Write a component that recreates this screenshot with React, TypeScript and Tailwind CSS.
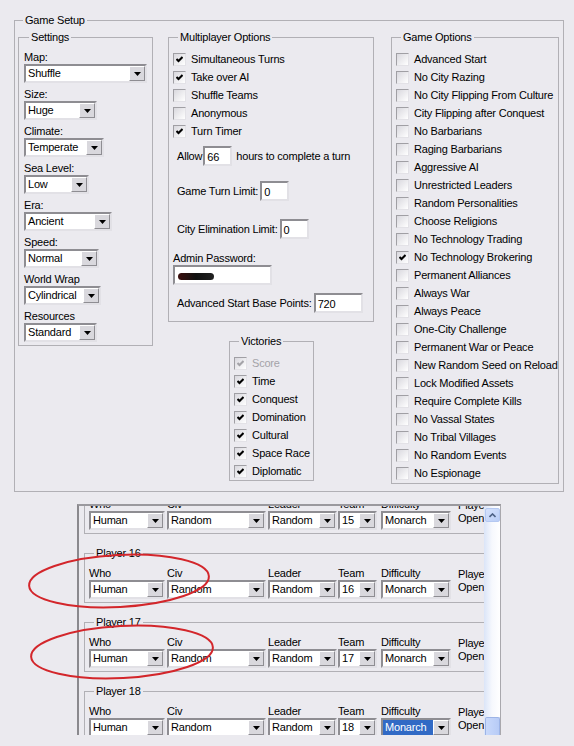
import React from 'react';

const settings = [
  { label: 'Map:', value: 'Shuffle', w: 'w-[123px]' },
  { label: 'Size:', value: 'Huge', w: 'w-[73px]' },
  { label: 'Climate:', value: 'Temperate', w: 'w-[80px]' },
  { label: 'Sea Level:', value: 'Low', w: 'w-[65px]' },
  { label: 'Era:', value: 'Ancient', w: 'w-[88px]' },
  { label: 'Speed:', value: 'Normal', w: 'w-[75px]' },
  { label: 'World Wrap', value: 'Cylindrical', w: 'w-[77px]' },
  { label: 'Resources', value: 'Standard', w: 'w-[73px]' },
];

const mpOptions = [
  { label: 'Simultaneous Turns', on: true },
  { label: 'Take over AI', on: true },
  { label: 'Shuffle Teams', on: false },
  { label: 'Anonymous', on: false },
  { label: 'Turn Timer', on: true },
];

const victories = [
  { label: 'Score', on: true, disabled: true },
  { label: 'Time', on: true },
  { label: 'Conquest', on: true },
  { label: 'Domination', on: true },
  { label: 'Cultural', on: true },
  { label: 'Space Race', on: true },
  { label: 'Diplomatic', on: true },
];

const gameOptions = [
  'Advanced Start',
  'No City Razing',
  'No City Flipping From Culture',
  'City Flipping after Conquest',
  'No Barbarians',
  'Raging Barbarians',
  'Aggressive AI',
  'Unrestricted Leaders',
  'Random Personalities',
  'Choose Religions',
  'No Technology Trading',
  'No Technology Brokering',
  'Permanent Alliances',
  'Always War',
  'Always Peace',
  'One-City Challenge',
  'Permanent War or Peace',
  'New Random Seed on Reload',
  'Lock Modified Assets',
  'Require Complete Kills',
  'No Vassal States',
  'No Tribal Villages',
  'No Random Events',
  'No Espionage',
];

function DownArrow() {
  return (
    <svg width="7" height="4" viewBox="0 0 7 4" aria-hidden>
      <path d="M0 0H7L3.5 4Z" fill="#000" />
    </svg>
  );
}

function Combo({ value, className = '', highlight = false }: { value: string; className?: string; highlight?: boolean }) {
  return (
    <div
      className={`flex h-[19px] shrink-0 border-2 border-t-[#8e8d92] border-l-[#8e8d92] border-b-[#e2e1e6] border-r-[#e2e1e6] bg-white ${className}`}
    >
      <div
        className={`flex min-w-0 flex-1 items-center overflow-hidden whitespace-nowrap pl-[2px] ${
          highlight ? 'bg-[#316ac5] text-white' : ''
        }`}
      >
        {value}
      </div>
      <div className="flex w-[16px] shrink-0 items-center justify-center border border-t-white border-l-white border-b-[#8e8d92] border-r-[#8e8d92] bg-[#d9d8dd]">
        <DownArrow />
      </div>
    </div>
  );
}

function Field({ className = '', children }: { className?: string; children?: React.ReactNode }) {
  return (
    <div
      className={`flex h-[20px] shrink-0 items-center border-2 border-t-[#8e8d92] border-l-[#8e8d92] border-b-[#e2e1e6] border-r-[#e2e1e6] bg-white pl-[2px] pt-[2px] ${className}`}
    >
      {children}
    </div>
  );
}

function Box({ on = false, disabled = false }: { on?: boolean; disabled?: boolean }) {
  return (
    <span className="flex h-[13px] w-[13px] shrink-0 items-center justify-center border border-t-[#a09fa4] border-l-[#a09fa4] border-b-[#e3e2e7] border-r-[#e3e2e7] bg-linear-to-br from-[#d9d8de] to-white">
      {on && (
        <svg width="7" height="7" viewBox="0 0 7 7" aria-hidden>
          <path d="M0.5 3L2.5 5L6.5 1" fill="none" stroke={disabled ? '#a4a3a8' : '#000'} strokeWidth="2" />
        </svg>
      )}
    </span>
  );
}

function CheckRow({ label, on = false, disabled = false }: { label: string; on?: boolean; disabled?: boolean }) {
  return (
    <div className="flex h-[18px] items-center">
      <Box on={on} disabled={disabled} />
      <span className={`ml-[5px] whitespace-nowrap ${disabled ? 'text-[#a4a3a8]' : ''}`}>{label}</span>
    </div>
  );
}

function Group({ title, className = '', children }: { title: string; className?: string; children: React.ReactNode }) {
  return (
    <fieldset className={`shrink-0 border border-[#b1b0b5] ${className}`}>
      <legend className="ml-[5px] px-[2px] leading-[13px]">{title}</legend>
      {children}
    </fieldset>
  );
}

function Col({ label, className = '', children }: { label: string; className?: string; children: React.ReactNode }) {
  return (
    <div className={`flex flex-col ${className}`}>
      <div className="h-[14px] leading-[14px] whitespace-nowrap">{label}</div>
      {children}
    </div>
  );
}

function PlayerBox({ n, selected = false }: { n: number; selected?: boolean }) {
  return (
    <fieldset className="w-[420px] shrink-0 border border-[#b1b0b5] pb-[3px] pl-[4px] pt-[6px]">
      <legend className="ml-[5px] px-[2px] leading-[13px]">Player {n}</legend>
      <div className="flex">
        <Col label="Who" className="mr-[2px]">
          <Combo value="Human" className="w-[76px]" />
        </Col>
        <Col label="Civ" className="mr-[2px]">
          <Combo value="Random" className="w-[99px]" />
        </Col>
        <Col label="Leader" className="mr-[1px]">
          <Combo value="Random" className="w-[69px]" />
        </Col>
        <Col label="Team" className="mr-[4px]">
          <Combo value={String(n)} className="w-[39px]" />
        </Col>
        <Col label="Difficulty" className="mr-[7px]">
          <Combo value="Monarch" className="w-[70px]" highlight={selected} />
        </Col>
        <div className="pt-[2px] leading-[13px] whitespace-nowrap">
          <div>Player</div>
          <div>Open</div>
        </div>
      </div>
    </fieldset>
  );
}

function Scrollbar() {
  return (
    <div className="flex w-[16px] shrink-0 flex-col justify-between bg-linear-to-r from-[#dbe5f8] via-[#f6f8fd] to-white">
      <div className="mx-auto mt-[2px] flex h-[14px] w-[15px] items-center justify-center rounded-[2px] border border-[#b4c8f1] bg-linear-to-br from-[#d6e2fc] to-[#b9cdf6]">
        <svg width="7" height="5" viewBox="0 0 7 5" aria-hidden>
          <path d="M0.5 4L3.5 1L6.5 4" fill="none" stroke="#4d6185" strokeWidth="1.6" />
        </svg>
      </div>
      <div className="mx-auto h-[18px] w-[15px] rounded-t-[2px] border border-b-0 border-[#9db4e6] bg-linear-to-r from-[#c9d9fb] to-[#b7cbf6]" />
    </div>
  );
}

export default function App() {
  return (
    <div className="relative min-h-screen bg-[#ebeaef] font-['Liberation_Sans',Arial,sans-serif] text-[11px] tracking-[-0.2px] text-black">
      <div className="pl-[14px] pt-[14px]">
        <Group title="Game Setup" className="w-[550px] pb-[7px] pl-[3px] pr-[4px]">
          <div className="mt-[4px] flex items-start">
            <Group title="Settings" className="w-[135px] pb-[3px] pl-[5px] pt-[6px]">
              <div className="flex flex-col gap-[4px]">
                {settings.map((s) => (
                  <Col key={s.label} label={s.label}>
                    <Combo value={s.value} className={s.w} />
                  </Col>
                ))}
              </div>
            </Group>

            <div className="ml-[15px] flex flex-col">
              <Group title="Multiplayer Options" className="w-[206px] pb-[8px] pl-[4px] pt-[6px]">
                {mpOptions.map((o) => (
                  <CheckRow key={o.label} label={o.label} on={o.on} />
                ))}
                <div className="mt-[6px] flex items-center pl-[4px] whitespace-nowrap">
                  <span>Allow</span>
                  <Field className="ml-[1px] w-[29px]">66</Field>
                  <span className="ml-[4px]">hours to complete a turn</span>
                </div>
                <div className="mt-[15px] flex items-center pl-[4px] whitespace-nowrap">
                  <span>Game Turn Limit:</span>
                  <Field className="ml-[2px] w-[29px]">0</Field>
                </div>
                <div className="mt-[18px] flex items-center pl-[4px] whitespace-nowrap">
                  <span>City Elimination Limit:</span>
                  <Field className="ml-[2px] w-[29px]">0</Field>
                </div>
                <div className="mt-[12px] h-[14px] leading-[14px]">Admin Password:</div>
                <Field className="w-[99px]">
                  <div className="ml-[1px] h-[7px] w-[36px] rounded-full bg-linear-to-r from-[#3a0d0d] via-[#111] to-[#222] blur-[0.6px]" />
                </Field>
                <div className="mt-[8px] flex items-center pl-[4px] whitespace-nowrap">
                  <span>Advanced Start Base Points:</span>
                  <Field className="ml-[2px] w-[49px]">720</Field>
                </div>
              </Group>

              <Group title="Victories" className="ml-[61px] mt-[13px] w-[85px] pl-[4px] pt-[6px]">
                {victories.map((v) => (
                  <CheckRow key={v.label} label={v.label} on={v.on} disabled={v.disabled} />
                ))}
              </Group>
            </div>

            <Group title="Game Options" className="ml-[17px] w-[168px] pb-[1px] pl-[4px] pt-[6px]">
              {gameOptions.map((g) => (
                <CheckRow key={g} label={g} on={g === 'No Technology Brokering'} />
              ))}
            </Group>
          </div>
        </Group>
      </div>

      <div className="ml-[77px] mt-[12px] flex h-[231px] w-[424px] border-t-2 border-l-2 border-r border-t-[#9a999e] border-l-[#8a898e] border-r-[#a9a8ad]">
        <div className="min-w-0 flex-1 overflow-hidden">
          <div className="-mt-[28px] flex flex-col gap-[13px] pl-[5px]">
            <PlayerBox n={15} />
            <PlayerBox n={16} />
            <PlayerBox n={17} />
            <PlayerBox n={18} selected />
          </div>
        </div>
        <Scrollbar />
      </div>

      <svg className="pointer-events-none absolute left-0 top-0" width="574" height="746" viewBox="0 0 574 746" aria-hidden>
        <ellipse cx="119" cy="581" rx="90" ry="26" transform="rotate(-3 119 581)" fill="none" stroke="#d3262b" strokeWidth="2" />
        <ellipse cx="122" cy="652" rx="91" ry="26" transform="rotate(-3 122 652)" fill="none" stroke="#d3262b" strokeWidth="2" />
      </svg>
    </div>
  );
}
